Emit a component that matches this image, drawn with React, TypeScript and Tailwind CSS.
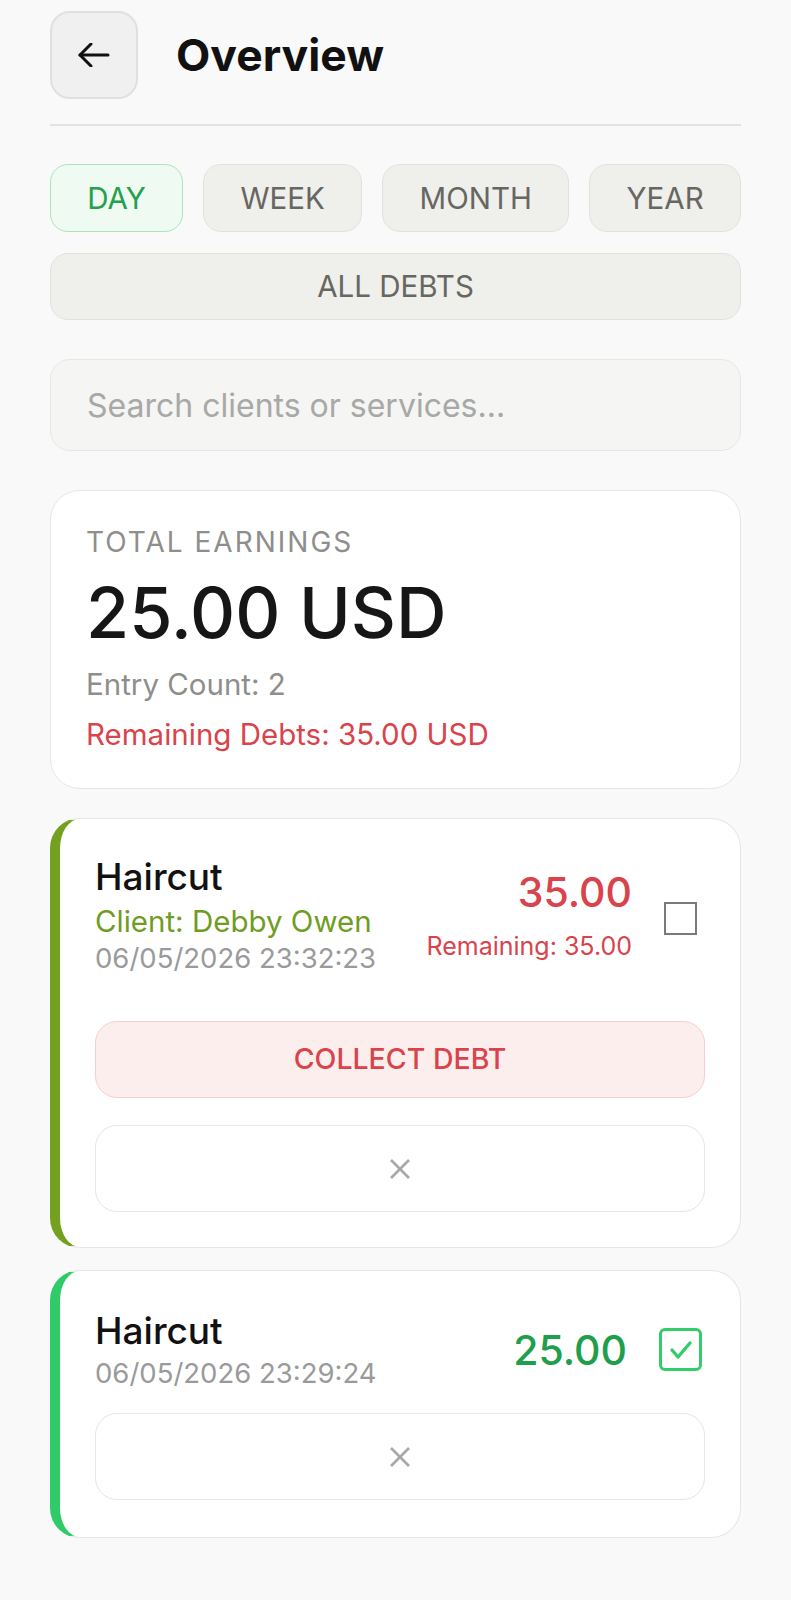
import React from "react";

function BackArrow() {
  return (
    <svg width="34" height="24" viewBox="0 0 34 24" fill="none" stroke="#111" strokeWidth="3" strokeLinecap="round" strokeLinejoin="round">
      <path d="M3 12H31" />
      <path d="M14 1L3 12L14 23" />
    </svg>
  );
}

function CloseMark() {
  return (
    <svg width="22" height="22" viewBox="0 0 22 22" fill="none" stroke="#a9a9a9" strokeWidth="2.6">
      <path d="M2 2L20 20" />
      <path d="M20 2L2 20" />
    </svg>
  );
}

function Tab({ label, active }: { label: string; active?: boolean }) {
  return (
    <button
      className={
        active
          ? "flex-auto h-[68px] rounded-[18px] border border-[#a9e4bb] bg-[#effbf2] text-[29.5px] text-[#25a04c]"
          : "flex-auto h-[68px] rounded-[18px] border border-[#e2e2dd] bg-[#efefeb] text-[29.5px] text-[#676762]"
      }
    >
      {label}
    </button>
  );
}

export default function App() {
  return (
    <div className="min-h-[1600px] bg-[#f9f9f9] px-[50px] pt-[11px] pb-[40px] font-['Inter',sans-serif]">
      {/* header */}
      <div className="flex items-center gap-[38px]">
        <button className="flex h-[88px] w-[88px] items-center justify-center rounded-[20px] border-2 border-[#e0e0e0] bg-[#f0f0f0]">
          <BackArrow />
        </button>
        <h1 className="text-[44.5px] font-bold text-[#111]">Overview</h1>
      </div>
      <div className="mt-[25px] border-t-2 border-[#e2e2e2]" />

      {/* range filters */}
      <div className="mt-[38px] flex gap-[20px]">
        <Tab label="DAY" active />
        <Tab label="WEEK" />
        <Tab label="MONTH" />
        <Tab label="YEAR" />
      </div>
      <button className="mt-[21px] h-[67px] w-full rounded-[18px] border border-[#e2e2dd] bg-[#efefeb] text-[29.5px] text-[#676762]">
        ALL DEBTS
      </button>

      <input
        className="mt-[39px] h-[92px] w-full rounded-[20px] border border-[#e6e6e4] bg-[#f5f5f3] px-[36px] text-[32px] text-[#333] outline-none placeholder:text-[#a8a8a6]"
        placeholder="Search clients or services..."
      />

      {/* totals */}
      <div className="mt-[39px] rounded-[30px] border border-[#e6e6e6] bg-white px-[35px] pt-[34px] pb-[36px]">
        <div className="text-[28px] leading-[34px] tracking-[2px] text-[#8e8e8b]">TOTAL EARNINGS</div>
        <div className="mt-[19px] text-[70px] font-medium leading-[70px] text-[#161616]">25.00 USD</div>
        <div className="mt-[19px] text-[29.5px] leading-[35px] text-[#8e8e8b]">Entry Count: 2</div>
        <div className="mt-[15px] text-[29.5px] leading-[35px] text-[#d9434b]">Remaining Debts: 35.00 USD</div>
      </div>

      {/* debt entry */}
      <div className="mt-[29px] rounded-[30px] border border-l-[10px] border-[#e6e6e6] border-l-[#73a01f] bg-white pl-[35px] pr-[35px] pt-[36px] pb-[35px]">
        <div className="flex items-center">
          <div className="flex-1">
            <div className="text-[37px] font-medium leading-[44px] text-[#111]">Haircut</div>
            <div className="mt-[5px] text-[29.5px] leading-[34px] text-[#6f9c23]">Client: Debby Owen</div>
            <div className="mt-[3px] text-[27.5px] leading-[34px] text-[#9a9a9a]">06/05/2026 23:32:23</div>
          </div>
          <div className="mb-[2px] text-right">
            <div className="text-[41px] font-medium leading-[50px] text-[#d9434b]">35.00</div>
            <div className="mt-[15px] text-[25px] leading-[29px] text-[#d9434b]">Remaining: 35.00</div>
          </div>
          <div className="ml-[32px] mr-[8px] mt-[6px] h-[33px] w-[33px] border-[2.5px] border-[#7a7a7a]" />
        </div>
        <button className="mt-[46px] h-[77px] w-full rounded-[22px] border border-[#f6cfd0] bg-[#fdeeee] text-[28.5px] font-medium text-[#d9434b]">
          COLLECT DEBT
        </button>
        <button className="mt-[27px] flex h-[87px] w-full items-center justify-center rounded-[22px] border border-[#e6e6e6] bg-white">
          <CloseMark />
        </button>
      </div>

      {/* paid entry */}
      <div className="mt-[22px] rounded-[30px] border border-l-[10px] border-[#e6e6e6] border-l-[#2ecb68] bg-white pl-[35px] pr-[35px] pt-[38px] pb-[37px]">
        <div className="flex items-center">
          <div className="flex-1">
            <div className="text-[37px] font-medium leading-[44px] text-[#111]">Haircut</div>
            <div className="mt-[3px] text-[27.5px] leading-[34px] text-[#9a9a9a]">06/05/2026 23:29:24</div>
          </div>
          <div className="text-[41px] font-medium leading-[50px] text-[#1f9e4b]">25.00</div>
          <div className="ml-[32px] mr-[3px] flex h-[43px] w-[43px] items-center justify-center rounded-[6px] border-[3px] border-[#33cc6b]">
            <svg width="24" height="20" viewBox="0 0 24 20" fill="none" stroke="#33cc6b" strokeWidth="3.4" strokeLinecap="round" strokeLinejoin="round">
              <path d="M3 10L9 17L21 3" />
            </svg>
          </div>
        </div>
        <button className="mt-[23px] flex h-[87px] w-full items-center justify-center rounded-[22px] border border-[#e6e6e6] bg-white">
          <CloseMark />
        </button>
      </div>
    </div>
  );
}
